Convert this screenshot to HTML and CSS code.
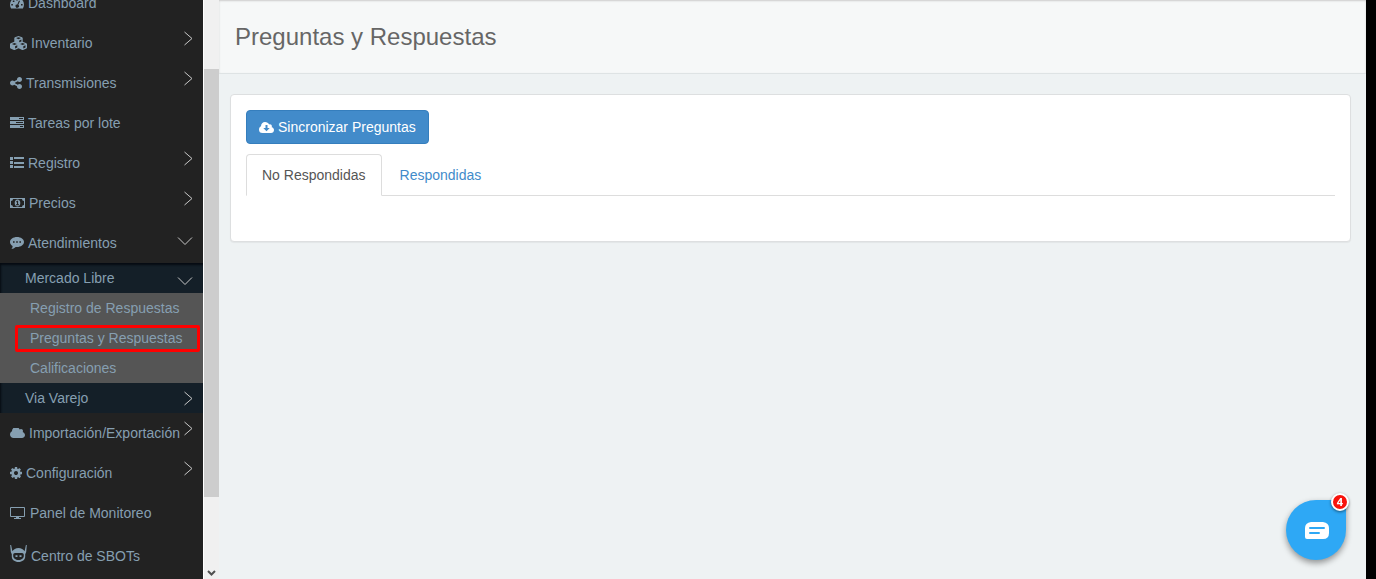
FILE: index.html
```html
<!DOCTYPE html>
<html lang="es">
<head>
    <meta charset="UTF-8">
    <meta name="viewport" content="width=device-width, initial-scale=1.0">
    <title>Preguntas y Respuestas</title>
    <link rel="stylesheet" href="styles.css">
</head>
<body>
    <svg class="symbols" aria-hidden="true">
        <symbol id="right" viewBox="0 0 16 16"><path d="M7.500 1l7.500 6.500-7.500 6.500"/></symbol>
        <symbol id="down" viewBox="0 0 16 16"><path d="M1 6.500l7 7 7-7"/></symbol>
        <symbol id="cloud" viewBox="64 256 1920 1280"><path d="M1984 1152q0 159-112.500 271.500t-271.500 112.500h-1088q-185 0-316.500-131.500t-131.500-316.500q0-132 71-241.500t187-163.500q-2-28-2-43 0-212 150-362t362-150q158 0 286.500 88t187.500 230q70-62 166-62 106 0 181 75t75 181q0 75-41 138 129 30 213 134.500t84 239.500z"/></symbol>
    </svg>

    <div class="page">
        <!-- Sidebar -->
        <nav class="sidebar">
            <ul class="menu">
                <li>
                    <a href="#" class="menu-link">
                        <svg class="icon" width="14" height="14" viewBox="0 0 14 14"><path fill-rule="evenodd" d="M7 1.500a7 7 0 0 1 7 7c0 1.500-.4 2.800-1.100 4H1.100A7.500 7.500 0 0 1 0 8.500a7 7 0 0 1 7-7zM6.200 3v1.600h1.600V3zM2.800 4.500v1.600h1.600V4.500zM1.300 8v1.600h1.600V8zM11 8v1.600h1.600V8zM9 4.500L7.300 8.400a1.700 1.700 0 1 0 1 .4L10 5z"/></svg>
                        <span>Dashboard</span>
                    </a>
                </li>
                <li>
                    <a href="#" class="menu-link">
                        <svg class="icon" width="17" height="14" viewBox="0 0 17 14"><path fill-rule="evenodd" d="M8.500 0l3.600 1.300.6.800v3.600l3.700 1.500.6.800v3.700l-.5.800L13 14h-.8l-3.700-1.700L4.800 14H4L.5 12.500l-.5-.8V8l.6-.8 3.700-1.500V2.100l.6-.8zM8.500 1.200L6 2.100l2.500 1.100L11 2.100zM9.200 4.400v1.900l2.200-.9V3.400zM4.400 6.900L1.900 8l2.500 1.100L6.900 8zM12.600 6.900L10.100 8l2.500 1.100L15.100 8zM5.100 10.300v2.200l2.200-1V9.300zM13.300 10.300v2.200l2.200-1V9.300z"/></svg>
                        <span>Inventario</span>
                        <svg class="arrow"><use href="#right"/></svg>
                    </a>
                </li>
                <li>
                    <a href="#" class="menu-link">
                        <svg class="icon" width="12" height="12" viewBox="128 128 1536 1536"><path d="M1344 1024q133 0 226.500 93.500t93.500 226.500-93.500 226.500-226.500 93.500-226.500-93.500-93.500-226.500q0-12 2-34l-360-180q-92 86-218 86-133 0-226.500-93.500t-93.500-226.500 93.500-226.500 226.500-93.500q126 0 218 86l360-180q-2-22-2-34 0-133 93.500-226.500t226.500-93.500 226.500 93.500 93.500 226.500-93.500 226.500-226.500 93.500q-126 0-218-86l-360 180q2 22 2 34t-2 34l360 180q92-86 218-86z"/></svg>
                        <span>Transmisiones</span>
                        <svg class="arrow"><use href="#right"/></svg>
                    </a>
                </li>
                <li>
                    <a href="#" class="menu-link">
                        <svg class="icon" width="14" height="12" viewBox="0 0 14 12"><path fill-rule="evenodd" d="M0 0h14v3H0zM9 1v1h4V1zM0 4h14v3H0zM6 5v1h7V5zM0 8h14v3H0zM10 9v1h3V9z"/></svg>
                        <span>Tareas por lote</span>
                    </a>
                </li>
                <li>
                    <a href="#" class="menu-link">
                        <svg class="icon" width="14" height="12" viewBox="0 0 14 12"><path d="M0 0h3v3H0zM4 0h10v2H4zM0 4h3v3H0zM4 5h10v2H4zM0 8h3v3H0zM4 9h10v2H4z"/></svg>
                        <span>Registro</span>
                        <svg class="arrow"><use href="#right"/></svg>
                    </a>
                </li>
                <li>
                    <a href="#" class="menu-link">
                        <svg class="icon" width="15" height="10" viewBox="0 0 15 10"><path fill-rule="evenodd" d="M0 0h15v10H0zM3 1a2 2 0 0 1-2 2v4a2 2 0 0 1 2 2h9a2 2 0 0 1 2-2V3a2 2 0 0 1-2-2zM7.500 1.500c1.700 0 2.800 1.500 2.800 3.500S9.200 8.500 7.500 8.500 4.700 7 4.700 5s1.100-3.500 2.800-3.500zM7.200 2.800L6 3.800l.5.600.5-.3v2.200H6v.9h3v-.9h-.9V2.800z"/></svg>
                        <span>Precios</span>
                        <svg class="arrow"><use href="#right"/></svg>
                    </a>
                </li>
                <li>
                    <a href="#" class="menu-link">
                        <svg class="icon" width="14" height="12" viewBox="0 0 14 12"><path fill-rule="evenodd" d="M7 0c3.900 0 7 2.200 7 5s-3.100 5-7 5l-1.300-.1C4.400 11.100 2.900 11.800 1.300 12c.8-.8 1.300-1.700 1.300-3C1 8.100 0 6.700 0 5c0-2.800 3.100-5 7-5zM3 4.200v1.600h1.600V4.200zM6.200 4.200v1.600h1.600V4.200zM9.400 4.200v1.600H11V4.200z"/></svg>
                        <span>Atendimientos</span>
                        <svg class="arrow"><use href="#down"/></svg>
                    </a>
                    <ul class="submenu">
                        <li>
                            <a href="#" class="submenu-link">
                                <span>Mercado Libre</span>
                                <svg class="arrow"><use href="#down"/></svg>
                            </a>
                            <ul class="options">
                                <li><a href="#" class="option-link">Registro de Respuestas</a></li>
                                <li><a href="#" class="option-link marked">Preguntas y Respuestas</a></li>
                                <li><a href="#" class="option-link">Calificaciones</a></li>
                            </ul>
                        </li>
                        <li>
                            <a href="#" class="submenu-link">
                                <span>Via Varejo</span>
                                <svg class="arrow"><use href="#right"/></svg>
                            </a>
                        </li>
                    </ul>
                </li>
                <li>
                    <a href="#" class="menu-link">
                        <svg class="icon" width="15" height="10"><use href="#cloud"/></svg>
                        <span>Importación/Exportación</span>
                        <svg class="arrow"><use href="#right"/></svg>
                    </a>
                </li>
                <li>
                    <a href="#" class="menu-link">
                        <svg class="icon" width="12" height="12" viewBox="128 128 1536 1536"><path d="M1152 896q0-106-75-181t-181-75-181 75-75 181 75 181 181 75 181-75 75-181zm512-109v222q0 12-8 23t-20 13l-185 28q-19 54-39 91 35 50 107 138 10 12 10 25t-9 23q-27 37-99 108t-94 71q-12 0-26-9l-138-108q-44 23-91 38-16 136-29 186-7 28-36 28h-222q-14 0-24.500-8.500t-11.500-21.500l-28-184q-49-16-90-37l-141 107q-10 9-25 9-14 0-25-11-126-114-165-168-7-10-7-23 0-12 8-23 15-21 51-66.500t54-70.500q-27-50-41-99l-183-27q-13-2-21-12.500t-8-23.500v-222q0-12 8-23t19-13l186-28q14-46 39-92-40-57-107-138-10-12-10-24 0-10 9-23 26-36 98.500-107.500t94.500-71.500q13 0 26 10l138 107q44-23 91-38 16-136 29-186 7-28 36-28h222q14 0 24.500 8.500t11.500 21.500l28 184q49 16 90 37l142-107q9-9 24-9 13 0 25 10 129 119 165 170 7 8 7 22 0 12-8 23-15 21-51 66.500t-54 70.500q26 50 41 98l183 28q13 2 21 12.500t8 23.500z"/></svg>
                        <span>Configuración</span>
                        <svg class="arrow"><use href="#right"/></svg>
                    </a>
                </li>
                <li>
                    <a href="#" class="menu-link">
                        <svg class="icon" width="16" height="12" viewBox="0 0 16 12"><path fill-rule="evenodd" d="M1 0h13a1 1 0 0 1 1 1v8a1 1 0 0 1-1 1H9v1h2v1H4v-1h2v-1H1a1 1 0 0 1-1-1V1a1 1 0 0 1 1-1zM1 1v8h13V1z"/></svg>
                        <span>Panel de Monitoreo</span>
                    </a>
                </li>
                <li>
                    <a href="#" class="menu-link tall">
                        <svg class="icon bot" width="17" height="18" viewBox="0 0 17 18"><path fill-rule="evenodd" d="M.2 0h.9l1.300 6.200C3.500 4.300 5.800 3 8.500 3s5 1.300 6.100 3.200L15.900 0h.9l-.6 7-1 2.200v2.300c0 3.200-3 5.500-6.700 5.500s-6.700-2.300-6.700-5.500V9.200L.8 7zM5 8c-1.100 0-1.800.8-1.800 1.900v1.200c0 2.300 2.300 4 5.300 4s5.300-1.700 5.300-4V9.900c0-1.100-.7-1.900-1.800-1.900zM5.500 10.200h2v1.900h-2zM9.500 10.200h2v1.900h-2z"/></svg>
                        <span>Centro de SBOTs</span>
                    </a>
                </li>
            </ul>
        </nav>

        <div class="scrollbar" aria-hidden="true">
            <div class="thumb"></div>
            <svg class="scroll-down" width="9" height="6" viewBox="0 0 9 6"><path d="M1 1l3.500 3.500L8 1"/></svg>
        </div>

        <!-- Content -->
        <main class="content">
            <header class="header">
                <h1>Preguntas y Respuestas</h1>
            </header>

            <section class="panel">
                <button type="button" class="sync-btn">
                    <svg width="15" height="11" viewBox="0 0 15 11"><path fill-rule="evenodd" d="M6 0c1.900 0 3.500 1 4.200 2.500C11.600 2 12.900 3 12.900 4.400l-.2.800C14 5.500 15 6.600 15 8c0 1.700-1.300 3-3 3H3.500A3.500 3.500 0 0 1 0 7.500c0-1.400.8-2.600 2-3.200C2 1.900 3.800 0 6 0zM6.500 3v3H4.300l3.200 3.200L10.700 6H8.500V3z"/></svg>
                    <span>Sincronizar Preguntas</span>
                </button>
                <ul class="tabs">
                    <li><a href="#" class="tab active">No Respondidas</a></li>
                    <li><a href="#" class="tab">Respondidas</a></li>
                </ul>
                <div class="tab-content"></div>
            </section>
        </main>
    </div>

    <!-- Chat widget -->
    <button type="button" class="chat-btn" aria-label="Chat">
        <svg width="24" height="19" viewBox="0 0 24 19"><path fill="#fff" d="M6 1h12q6 1 6 6v5q0 6-6 6H2a2 2 0 0 1-2-2V7q0-5 6-6z"/><path stroke="#2ea8f5" stroke-width="2" stroke-linecap="round" d="M5 7h14M5 12h9"/></svg>
        <span class="badge">4</span>
    </button>
</body>
</html>
```
FILE: styles.css
```css
* {
    box-sizing: border-box;
}

body {
    margin: 0;
    font-family: "Liberation Sans", Arial, sans-serif;
    font-size: 14px;
    line-height: 20px;
    color: #58666e;
    background: #000;
}

ul {
    margin: 0;
    padding: 0;
    list-style: none;
}

a {
    text-decoration: none;
}

.symbols {
    position: absolute;
    width: 0;
    height: 0;
}

.page {
    display: flex;
    height: 100vh;
    margin-right: 10px;
    overflow: hidden;
    background: #eef2f3;
}

/* Sidebar */
.sidebar {
    flex: 0 0 203px;
    overflow: hidden;
    background: #222;
}

/* the list is scrolled past its first item */
.menu {
    margin-top: -17px;
}

.menu-link {
    display: flex;
    align-items: center;
    gap: 4px;
    height: 40px;
    padding: 0 10px;
    color: #869fb1;
    white-space: nowrap;
}

.menu-link.tall {
    height: 46px;
}

.icon {
    flex: none;
    fill: #869fb1;
}

.icon.bot {
    margin-bottom: 4px;
}

.arrow {
    flex: none;
    align-self: flex-start;
    width: 16px;
    height: 16px;
    margin: 8px 0 0 auto;
    fill: none;
    stroke: #c8c8c8;
}

.menu-link span {
    flex: 1;
    min-width: 0;
}

.submenu {
    background: #141f28;
    box-shadow: inset 1px 2px 2px #060b12;
}

.submenu-link {
    display: flex;
    align-items: center;
    height: 30px;
    padding: 0 10px 0 25px;
    color: #869fb1;
}

.options {
    background: #555;
}

.option-link {
    display: block;
    padding: 5px 0 5px 30px;
    color: #869fb1;
}

.marked {
    position: relative;
}

.marked::after {
    content: "";
    position: absolute;
    inset: 2px 3px 1px 15px;
    border: 3px solid #f00;
    border-radius: 2px;
}

.scrollbar {
    flex: 0 0 16px;
    display: flex;
    flex-direction: column;
    align-items: center;
    padding-top: 69px;
    border-left: 1px solid #fff;
    background: #f0f0f0;
}

.thumb {
    width: 100%;
    height: 84%;
    background: #cdcdcd;
}

.scroll-down {
    flex: none;
    margin: auto 0 3px;
    fill: none;
    stroke: #505050;
    stroke-width: 2;
}

/* Content */
.content {
    flex: 1;
    min-width: 0;
}

.header {
    padding: 20px 16px 19px;
    border-bottom: 1px solid #dee3e4;
    background: #f6f8f8;
    box-shadow: inset 0 1px 2px #ccc;
}

.header h1 {
    margin: 0;
    font-size: 24px;
    font-weight: 400;
    line-height: 34px;
    color: #666;
}

.panel {
    margin: 20px 15px 0 11px;
    padding: 15px;
    border: 1px solid #dddfe0;
    border-radius: 4px;
    background: #fff;
    box-shadow: 0 1px 1px rgba(0, 0, 0, 0.05);
}

.sync-btn {
    display: flex;
    align-items: center;
    gap: 4px;
    padding: 6px 12px;
    border: 1px solid #357ebd;
    border-radius: 4px;
    background: #428bca;
    color: #fff;
    font: inherit;
    cursor: pointer;
}

.sync-btn svg {
    fill: #fff;
}

.tabs {
    display: flex;
    gap: 2px;
    margin-top: 10px;
    border-bottom: 1px solid #ddd;
}

.tab {
    display: block;
    margin-bottom: -1px;
    padding: 10px 15px;
    border: 1px solid transparent;
    border-radius: 4px 4px 0 0;
    color: #428bca;
}

.tab.active {
    border-color: #ddd #ddd #fff;
    background: #fff;
    color: #555;
}

.tab-content {
    height: 30px;
}

/* Chat widget */
.chat-btn {
    position: fixed;
    right: 30px;
    bottom: 19px;
    display: flex;
    align-items: center;
    justify-content: center;
    width: 60px;
    height: 60px;
    padding: 0 0 0 2px;
    border: none;
    border-radius: 50% 4px 50% 50%;
    background: #2ea8f5;
    box-shadow: 0 3px 6px rgba(0, 0, 0, 0.4);
    cursor: pointer;
}

.chat-btn svg {
    fill: none;
}

.badge {
    position: absolute;
    top: -7px;
    right: -3px;
    width: 18px;
    height: 18px;
    border: 2px solid #fff;
    border-radius: 50%;
    background: #f8130c;
    box-shadow: 0 1px 3px rgba(0, 0, 0, 0.5);
    color: #fff;
    font-family: "Open Sans", sans-serif;
    font-size: 11px;
    font-weight: 700;
    line-height: 14px;
    text-align: center;
}
```
